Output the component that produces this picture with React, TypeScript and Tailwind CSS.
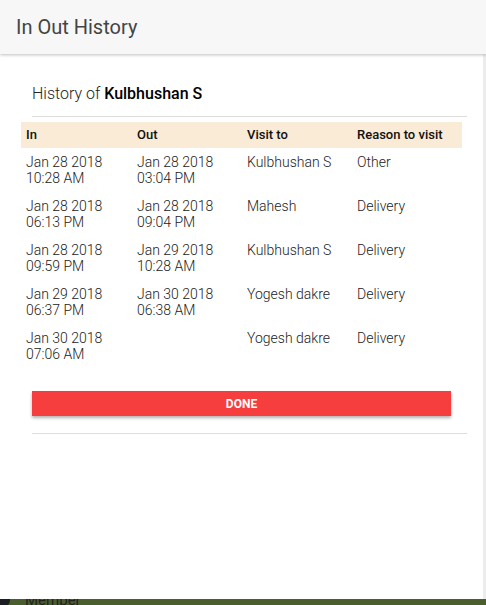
const rows = [
  { inDate: "Jan 28 2018", inTime: "10:28 AM", outDate: "Jan 28 2018", outTime: "03:04 PM", visit: "Kulbhushan S", reason: "Other" },
  { inDate: "Jan 28 2018", inTime: "06:13 PM", outDate: "Jan 28 2018", outTime: "09:04 PM", visit: "Mahesh", reason: "Delivery" },
  { inDate: "Jan 28 2018", inTime: "09:59 PM", outDate: "Jan 29 2018", outTime: "10:28 AM", visit: "Kulbhushan S", reason: "Delivery" },
  { inDate: "Jan 29 2018", inTime: "06:37 PM", outDate: "Jan 30 2018", outTime: "06:38 AM", visit: "Yogesh dakre", reason: "Delivery" },
  { inDate: "Jan 30 2018", inTime: "07:06 AM", outDate: "", outTime: "", visit: "Yogesh dakre", reason: "Delivery" },
];

export default function App() {
  return (
    <div className="flex h-[605px] w-[486px] flex-col overflow-hidden bg-white font-['Roboto',sans-serif]">
      <header className="relative z-10 flex h-[54px] shrink-0 items-center bg-[#f7f7f7] px-4 shadow-[0_1px_3px_rgba(0,0,0,0.25)]">
        <h1 className="text-[20px] text-[#444]">In Out History</h1>
      </header>

      <div className="flex min-h-0 flex-1">
        <main className="flex-1 pl-8 pr-4 pt-[30px]">
          <p className="text-[16px] font-light leading-[20px] text-[#222]">
            History of <span className="font-medium text-black">Kulbhushan S</span>
          </p>
          <hr className="mt-3 border-[#ddd]" />

          <table className="ml-[-11px] mt-[5px] w-[441px] table-fixed border-collapse text-left">
            <colgroup>
              <col className="w-[111px]" />
              <col className="w-[110px]" />
              <col className="w-[110px]" />
              <col className="w-[110px]" />
            </colgroup>
            <thead>
              <tr className="h-[26px] bg-[#faebd7] text-[13px] font-medium text-[#111]">
                <th className="pl-[5px] font-medium">In</th>
                <th className="pl-[5px] font-medium">Out</th>
                <th className="pl-[5px] font-medium">Visit to</th>
                <th className="pl-[5px] font-medium">Reason to visit</th>
              </tr>
            </thead>
            <tbody className="text-[14px] font-light leading-[16px] text-[#222]">
              {rows.map((r, i) => (
                <tr key={i} className="h-[44px] align-top">
                  <td className="pl-[5px] pt-[6px]">
                    {r.inDate}
                    <br />
                    {r.inTime}
                  </td>
                  <td className="pl-[5px] pt-[6px]">
                    {r.outDate}
                    <br />
                    {r.outTime}
                  </td>
                  <td className="pl-[5px] pt-[6px]">{r.visit}</td>
                  <td className="pl-[5px] pt-[6px]">{r.reason}</td>
                </tr>
              ))}
            </tbody>
          </table>

          <button className="mt-[23px] h-[25px] w-[419px] bg-[#f73e3e] text-[12px] font-bold text-white shadow-[0_2px_3px_rgba(0,0,0,0.3)]">
            DONE
          </button>
          <hr className="mt-[17px] border-[#ddd]" />
        </main>
        <div className="w-[3px] bg-[#ececec]" />
      </div>

      <div className="relative h-[6px] shrink-0 overflow-hidden bg-[#4a5d2c]">
        <div className="absolute left-[-4px] top-[-6px] h-[14px] w-[14px] rounded-full bg-[#1c1f22]" />
        <span className="absolute left-[25px] top-[-10px] text-[15px] text-[#222]">Member</span>
      </div>
    </div>
  );
}
